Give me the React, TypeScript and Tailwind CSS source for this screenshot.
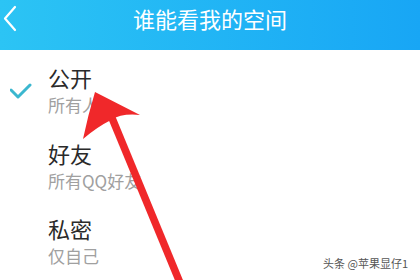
import React from "react";

const items = [
  { title: "公开", sub: "所有人", checked: true },
  { title: "好友", sub: "所有QQ好友", checked: false },
  { title: "私密", sub: "仅自己", checked: false },
];

const CheckMark = () => (
  <svg width="24" height="18" viewBox="0 0 24 18">
    <polyline points="1,7 8,14 20,2" fill="none" stroke="#3bb7cf" strokeWidth="3" strokeLinecap="round" strokeLinejoin="round" />
  </svg>
);

export default function App() {
  return (
    <div
      className="relative w-[420px] h-[280px] overflow-hidden bg-white"
      style={{ fontFamily: '"Noto Sans CJK SC", "Noto Sans", sans-serif' }}
    >
      {/* header */}
      <div className="relative h-[50px] bg-gradient-to-r from-[#2cc4f4] to-[#18a6f5] flex justify-center pt-[3px]">
        <svg className="absolute left-[2px] top-[5px]" width="16" height="28" viewBox="0 0 16 28">
          <polyline points="13,2 3,13.5 13,25" fill="none" stroke="white" strokeWidth="2.2" strokeLinecap="round" strokeLinejoin="round" />
        </svg>
        <span className="text-white text-[22px] leading-[30px]">谁能看我的空间</span>
      </div>

      {/* options */}
      <div className="pt-[13px]">
        {items.map((it) => (
          <div key={it.title} className="flex h-[75.5px]">
            <div className="w-[48px] flex items-start pl-[10px] pt-[20px]">
              {it.checked && <CheckMark />}
            </div>
            <div className="flex flex-col">
              <span className="text-[22px] leading-[28px] text-[#2a2a2a]">{it.title}</span>
              <span className="text-[17px] leading-[22px] mt-[3px] text-[#a0a0a0]">{it.sub}</span>
            </div>
          </div>
        ))}
      </div>

      {/* red arrow annotation */}
      <svg className="absolute left-0 top-0" width="420" height="280" viewBox="0 0 420 280">
        <line x1="112" y1="118" x2="183" y2="290" stroke="#f0282a" strokeWidth="7.5" />
        <path d="M95,92 L140,115 Q122,113 111,120 Q97,127 83,139 Q88,115 95,92 Z" fill="#f0282a" />
      </svg>

      {/* watermark */}
      <span className="absolute right-[12px] top-[256px] text-[11px] leading-[14px] text-[#555]">
        头条 @苹果显仔1
      </span>
    </div>
  );
}
